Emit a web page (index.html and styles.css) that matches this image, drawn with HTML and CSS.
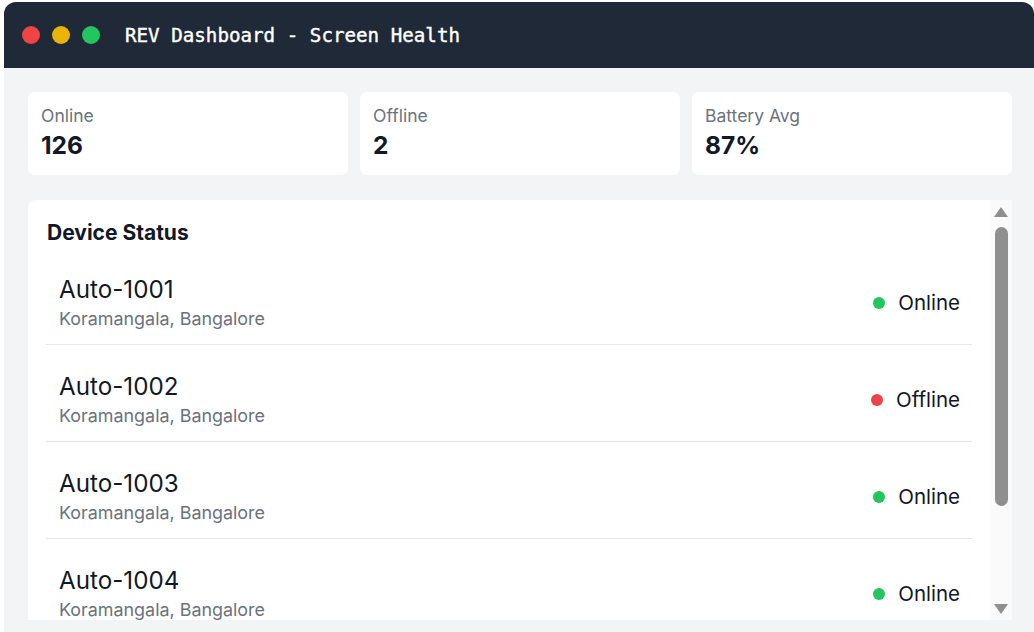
FILE: index.html
```html
<!DOCTYPE html>
<html lang="en">
<head>
<meta charset="utf-8">
<title>REV Dashboard - Screen Health</title>
<link rel="stylesheet" href="styles.css">
</head>
<body>
<div class="window">
  <header class="titlebar">
    <div class="lights">
      <span class="light red"></span>
      <span class="light yellow"></span>
      <span class="light green"></span>
    </div>
    <h1 class="title">REV Dashboard - Screen Health</h1>
  </header>
  <main class="content">
    <section class="stats">
      <div class="card">
        <div class="card-label">Online</div>
        <div class="card-value">126</div>
      </div>
      <div class="card">
        <div class="card-label">Offline</div>
        <div class="card-value">2</div>
      </div>
      <div class="card">
        <div class="card-label">Battery Avg</div>
        <div class="card-value">87%</div>
      </div>
    </section>
    <section class="panel">
      <div class="panel-body">
        <h2 class="panel-title">Device Status</h2>
        <ul class="devices">
          <li class="device">
            <div class="device-info">
              <div class="device-name">Auto-1001</div>
              <div class="device-loc">Koramangala, Bangalore</div>
            </div>
            <div class="status"><span class="dot on"></span>Online</div>
          </li>
          <li class="device">
            <div class="device-info">
              <div class="device-name">Auto-1002</div>
              <div class="device-loc">Koramangala, Bangalore</div>
            </div>
            <div class="status"><span class="dot off"></span>Offline</div>
          </li>
          <li class="device">
            <div class="device-info">
              <div class="device-name">Auto-1003</div>
              <div class="device-loc">Koramangala, Bangalore</div>
            </div>
            <div class="status"><span class="dot on"></span>Online</div>
          </li>
          <li class="device">
            <div class="device-info">
              <div class="device-name">Auto-1004</div>
              <div class="device-loc">Koramangala, Bangalore</div>
            </div>
            <div class="status"><span class="dot on"></span>Online</div>
          </li>
        </ul>
      </div>
      <div class="scrollbar">
        <span class="arrow up"></span>
        <div class="track">
          <div class="thumb"></div>
        </div>
        <span class="arrow down"></span>
      </div>
    </section>
  </main>
</div>
</body>
</html>
```

FILE: styles.css
```css
* { box-sizing: border-box; }

html, body {
  margin: 0;
  padding: 0;
  background: #ffffff;
  overflow: hidden;
}

body {
  font-family: Inter, "Noto Sans", sans-serif;
  color: #111827;
}

.window {
  margin: 2px 0 0 4px;
  width: 1030px;
  height: 630px;
  background: #f3f4f6;
  border-radius: 12px 12px 0 0;
  overflow: hidden;
  display: flex;
  flex-direction: column;
}

.titlebar {
  height: 66px;
  flex: none;
  background: #1f2937;
  display: flex;
  align-items: center;
  padding-left: 18px;
}

.lights {
  display: flex;
  gap: 12px;
}

.light {
  width: 18px;
  height: 18px;
  border-radius: 50%;
  display: block;
}
.light.red { background: #ef4444; }
.light.yellow { background: #eab308; }
.light.green { background: #22c55e; }

.title {
  margin: 0 0 0 25px;
  font-family: "DejaVu Sans Mono", "Liberation Mono", monospace;
  font-size: 19.2px;
  font-weight: 400;
  color: #ffffff;
  -webkit-text-stroke: 0.4px #ffffff;
}

.content {
  flex: 1;
  padding: 24px 22px 0 24px;
  display: flex;
  flex-direction: column;
  gap: 25px;
}

.stats {
  display: grid;
  grid-template-columns: repeat(3, 1fr);
  gap: 12px;
}

.card {
  background: #ffffff;
  border-radius: 7px;
  height: 83px;
  padding: 13px 13px 0 13px;
}

.card-label {
  font-size: 17.5px;
  color: #6b7280;
}

.card-value {
  margin-top: 4px;
  font-size: 24.5px;
  font-weight: 700;
  color: #111827;
}

.panel {
  height: 420px;
  background: #ffffff;
  border-radius: 8px 0 0 0;
  display: flex;
  overflow: hidden;
}

.panel-body {
  flex: 1;
  overflow: hidden;
  padding: 20px 18px 0 18px;
}

.panel-title {
  margin: 0 0 16px 1px;
  font-size: 21px;
  font-weight: 700;
  color: #111827;
}

.devices {
  list-style: none;
  margin: 0;
  padding: 0;
  display: flex;
  flex-direction: column;
  gap: 13px;
}

.device {
  padding: 14px 12px 14px 13px;
  border-bottom: 1px solid #e5e7eb;
  display: flex;
  align-items: center;
  justify-content: space-between;
}

.device-name {
  font-size: 24.2px;
  line-height: 29px;
  color: #111827;
}

.device-loc {
  margin-top: 4px;
  font-size: 17.9px;
  line-height: 22px;
  color: #6b7280;
}

.status {
  display: flex;
  align-items: center;
  gap: 13px;
  font-size: 20.5px;
  color: #111827;
}

.dot {
  width: 12px;
  height: 12px;
  border-radius: 50%;
  display: block;
}
.dot.on { background: #22c55e; }
.dot.off { background: #ef4444; }

.scrollbar {
  width: 22px;
  flex: none;
  background: #fafafa;
  display: flex;
  flex-direction: column;
  align-items: center;
  padding: 7px 0 6px;
}

.arrow {
  width: 0;
  height: 0;
  border-left: 7px solid transparent;
  border-right: 7px solid transparent;
  display: block;
  flex: none;
}
.arrow.up { border-bottom: 10px solid #8f8f8f; }
.arrow.down { border-top: 10px solid #8f8f8f; }

.track {
  flex: 1;
  width: 100%;
  display: flex;
  justify-content: center;
  padding-top: 10px;
}

.thumb {
  width: 13px;
  height: 279px;
  border-radius: 7px;
  background: #8f8f8f;
}
```
